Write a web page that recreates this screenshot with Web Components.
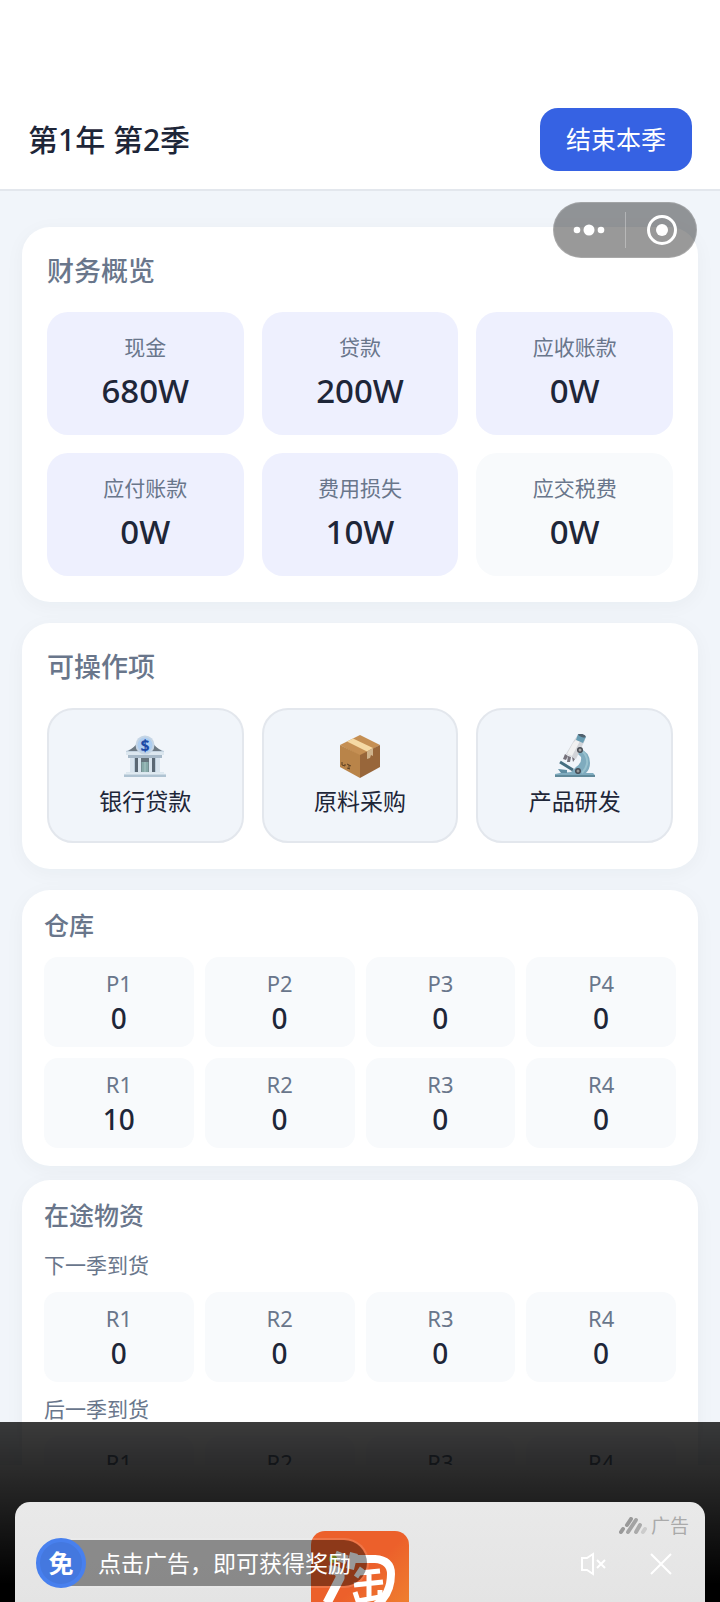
<!DOCTYPE html>
<html lang="zh-CN">
<head>
<meta charset="utf-8">
<meta name="viewport" content="width=device-width, initial-scale=1">
<title>第1年 第2季</title>
<style>
  :root {
    --ink: #1e2638;
    --muted: #69768b;
    --page: #f1f5fa;
    --line: #e3e7ed;
    --tile: #f8fafc;
    --tile-accent: #eef0fe;
    --primary: #3662e3;
  }

  body {
    margin: 0;
    background: var(--page);
    color: var(--ink);
    font-family: "Noto Sans", "Noto Sans CJK SC", sans-serif;
  }

  main {
    display: flex;
    flex-direction: column;
    padding: 36px 22px 0;
  }
</style>
</head>
<body>
  <game-header title="第1年 第2季">结束本季</game-header>

  <main>
    <info-card title="财务概览">
      <tile-grid columns="3">
        <stat-tile label="现金" accent>680W</stat-tile>
        <stat-tile label="贷款" accent>200W</stat-tile>
        <stat-tile label="应收账款" accent>0W</stat-tile>
        <stat-tile label="应付账款" accent>0W</stat-tile>
        <stat-tile label="费用损失" accent>10W</stat-tile>
        <stat-tile label="应交税费">0W</stat-tile>
      </tile-grid>
    </info-card>

    <info-card title="可操作项">
      <tile-grid columns="3">
        <action-tile icon="bank">银行贷款</action-tile>
        <action-tile icon="box">原料采购</action-tile>
        <action-tile icon="microscope">产品研发</action-tile>
      </tile-grid>
    </info-card>

    <info-card title="仓库" compact>
      <tile-grid columns="4">
        <stat-tile label="P1" compact>0</stat-tile>
        <stat-tile label="P2" compact>0</stat-tile>
        <stat-tile label="P3" compact>0</stat-tile>
        <stat-tile label="P4" compact>0</stat-tile>
        <stat-tile label="R1" compact>10</stat-tile>
        <stat-tile label="R2" compact>0</stat-tile>
        <stat-tile label="R3" compact>0</stat-tile>
        <stat-tile label="R4" compact>0</stat-tile>
      </tile-grid>
    </info-card>

    <info-card title="在途物资" compact>
      <arrival-group title="下一季到货">
        <tile-grid columns="4">
          <stat-tile label="R1" compact>0</stat-tile>
          <stat-tile label="R2" compact>0</stat-tile>
          <stat-tile label="R3" compact>0</stat-tile>
          <stat-tile label="R4" compact>0</stat-tile>
        </tile-grid>
      </arrival-group>
      <arrival-group title="后一季到货">
        <tile-grid columns="4">
          <stat-tile label="R1" compact></stat-tile>
          <stat-tile label="R2" compact></stat-tile>
          <stat-tile label="R3" compact></stat-tile>
          <stat-tile label="R4" compact></stat-tile>
        </tile-grid>
      </arrival-group>
    </info-card>
  </main>

  <app-capsule></app-capsule>
  <ad-sheet tag="广告" badge="免">点击广告，即可获得奖励</ad-sheet>

<script>
// Attach an open shadow root holding the given styles and markup.
const render = (el, css, html) => {
  const template = document.createElement('template');
  template.innerHTML = `<style>${css}</style>${html}`;
  el.attachShadow({ mode: 'open' }).appendChild(template.content.cloneNode(true));
};

const icons = {
  bank: /* html */`
    <svg viewBox="0 0 44 44" aria-hidden="true">
      <path d="M3 17 Q13 14 17 7 H27 Q31 14 41 17 V20 H3z" fill="#c3d2df"/>
      <path d="M5 17 Q12 13 15 8 V17zM39 17 Q32 13 29 8 V17z" fill="#6d7983"/>
      <path d="M3 18 H41 V21 H3z" fill="#dce7ef"/>
      <path d="M5 21 H39 V24 H5z" fill="#a8bac9"/>
      <path d="M7 24 H37 V38 H7z" fill="#b9cbd9"/>
      <path d="M12 24 H15 V38 H12zM29 24 H32 V38 H29z" fill="#596773"/>
      <path d="M17 24 H27 V38 H17z" fill="#66747d"/>
      <path d="M18.500 28 H25.500 V38 H18.500z" fill="#87aaa9"/>
      <path d="M22 28 V38" stroke="#a9c6c5"/>
      <path d="M7 24 H11 V38 H7zM15 24 H18 V38 H15zM26 24 H29 V38 H26zM33 24 H37 V38 H33z" fill="#d8e4ee"/>
      <path d="M3 38 H41 V40 H3z" fill="#dce7ef"/>
      <path d="M1 40 H43 V43 H1z" fill="#afc3d2"/>
      <path d="M1 40 H43" stroke="#e5eef4"/>
      <circle cx="22" cy="11" r="9.500" fill="#c5d5e5"/>
      <circle cx="22" cy="11" r="7.500" fill="#adcdf0"/>
      <text x="22" y="17" text-anchor="middle" font-size="16" font-weight="700" fill="#1c49a5">$</text>
    </svg>`,
  box: /* html */`
    <svg viewBox="0 0 44 44" aria-hidden="true">
      <path d="M22 1 L42 11 L22 22 L2 11z" fill="#c58f53"/>
      <path d="M2 11 L22 21 V44 L2 33z" fill="#b98449"/>
      <path d="M42 11 L22 21 V44 L42 33z" fill="#98663a"/>
      <path d="M9 7.500 L15 4.500 L35 14 L29 17.500z" fill="#f5d9a4"/>
      <path d="M29 17.500 L35 14 V22 L33 21 L32 24 L29 25z" fill="#cfb38c"/>
      <path d="M4 28 V31 L7 32 V30M9 30 L13 32M11 31 V35M9 34 L12 35" fill="none" stroke="#5c4024"/>
    </svg>`,
  microscope: /* html */`
    <svg viewBox="0 0 44 44" aria-hidden="true">
      <path d="M26 14 Q37 18 37 29 Q37 35 33 39 H40 Q42 40 42 43 H2 V40 L7 39 L18 38 L23 33 Q29 29 28 23 L24 19z" fill="#7fabbe"/>
      <path d="M29 17 Q35 22 34 30 Q33 35 29 39" fill="none" stroke="#98c1ce" stroke-width="2"/>
      <path d="M2 42 H42" stroke="#60899a" stroke-width="2"/>
      <path d="M20 8 L24 2 L32 6 L23 25 L13 20z" fill="#d2d4d8"/>
      <path d="M20 9 L24 5 L27 7 L19 22 L14 20z" fill="#f1f1f1"/>
      <path d="M25 0 L33 3 L30 9 L23 6z" fill="#699db3"/>
      <ellipse cx="29" cy="1.500" rx="4" ry="1.500" fill="#50616e" transform="rotate(20 29 1.500)"/>
      <path d="M12 20 L10 25 L13 26 L15 22zM15 22 L14 28 L17 28 L18 23zM19 23 L20 28 L22 25z" fill="#77737c"/>
      <path d="M7 28 L20 36" stroke="#466e80" stroke-width="3"/>
      <path d="M5 35 L14 36 V39 H8z" fill="#5e8ca1"/>
      <circle cx="27" cy="16" r="3" fill="#494d54"/><circle cx="27" cy="16" r="1.500" fill="#aaa"/>
      <circle cx="25" cy="37" r="3" fill="#454b54"/><circle cx="25" cy="37" r="1.500" fill="#999"/>
    </svg>`,
};

class GameHeader extends HTMLElement {
  constructor() {
    super();
    render(this, /* css */`
      :host {
        display: flex;
        align-items: center;
        justify-content: space-between;
        padding: 108px 28px 18px;
        background: #fff;
        border-bottom: 2px solid var(--line);
      }
      h1 {
        margin: 0;
        font-size: 30px;
        font-weight: 500;
        line-height: 44px;
      }
      button {
        padding: 13px 26px 14px;
        border: 0;
        border-radius: 18px;
        background: var(--primary);
        color: #fff;
        font: 400 25px/36px "Noto Sans", "Noto Sans CJK SC", sans-serif;
      }
    `, /* html */`<h1></h1><button type="button"><slot></slot></button>`);
  }

  connectedCallback() {
    this.shadowRoot.querySelector('h1').textContent = this.getAttribute('title');
  }
}

class InfoCard extends HTMLElement {
  constructor() {
    super();
    render(this, /* css */`
      :host {
        display: block;
        margin-bottom: 21px;
        padding: 25px 25px 26px;
        border-radius: 28px;
        background: #fff;
        box-shadow: 0 4px 20px rgba(30, 41, 59, .04);
      }
      h2 {
        margin: 0 0 22px;
        color: var(--muted);
        font-size: 27px;
        font-weight: 500;
        line-height: 38px;
      }
      :host([compact]) {
        margin-bottom: 14px;
        padding: 18px 22px;
      }
      :host([compact]) h2 {
        margin-bottom: 15px;
        font-size: 25px;
        line-height: 34px;
      }
    `, /* html */`<h2></h2><slot></slot>`);
  }

  connectedCallback() {
    this.shadowRoot.querySelector('h2').textContent = this.getAttribute('title');
  }
}

class TileGrid extends HTMLElement {
  constructor() {
    super();
    render(this, /* css */`
      :host {
        display: grid;
        grid-template-columns: repeat(3, 1fr);
        gap: 18px;
      }
      :host([columns="4"]) {
        grid-template-columns: repeat(4, 1fr);
        gap: 11px;
      }
    `, /* html */`<slot></slot>`);
  }
}

class StatTile extends HTMLElement {
  constructor() {
    super();
    render(this, /* css */`
      :host {
        display: block;
        padding: 20px 0 22px;
        border-radius: 21px;
        background: var(--tile);
        text-align: center;
      }
      :host([accent]) {
        background: var(--tile-accent);
      }
      .label {
        margin-bottom: 6px;
        color: var(--muted);
        font-size: 21px;
        line-height: 30px;
      }
      .value {
        height: 45px;
        font-size: 33px;
        font-weight: 500;
        line-height: 45px;
      }
      :host([compact]) {
        padding: 10px 0;
        border-radius: 14px;
      }
      :host([compact]) .label {
        margin: 0;
        font-size: 22px;
        line-height: 32px;
      }
      :host([compact]) .value {
        height: 38px;
        font-size: 28px;
        line-height: 38px;
      }
    `, /* html */`<div class="label"></div><div class="value"><slot></slot></div>`);
  }

  connectedCallback() {
    this.shadowRoot.querySelector('.label').textContent = this.getAttribute('label');
  }
}

class ActionTile extends HTMLElement {
  constructor() {
    super();
    render(this, /* css */`
      :host {
        display: block;
      }
      button {
        display: flex;
        flex-direction: column;
        align-items: center;
        gap: 6px;
        width: 100%;
        padding: 24px 0 23px;
        border: 2px solid var(--line);
        border-radius: 26px;
        background: var(--page);
        color: var(--ink);
        font: 400 23px/34px "Noto Sans", "Noto Sans CJK SC", sans-serif;
      }
      svg {
        display: block;
        width: 44px;
        height: 44px;
      }
    `, /* html */`<button type="button">${icons[this.getAttribute('icon')]}<span><slot></slot></span></button>`);
  }
}

class ArrivalGroup extends HTMLElement {
  constructor() {
    super();
    render(this, /* css */`
      :host {
        display: block;
        margin-bottom: 9px;
      }
      h3 {
        margin: 0 0 8px;
        color: var(--muted);
        font-size: 21px;
        font-weight: 400;
        line-height: 37px;
      }
    `, /* html */`<h3></h3><slot></slot>`);
  }

  connectedCallback() {
    this.shadowRoot.querySelector('h3').textContent = this.getAttribute('title');
  }
}

// Floating menu / close pill
class AppCapsule extends HTMLElement {
  constructor() {
    super();
    render(this, /* css */`
      :host {
        position: fixed;
        top: 202px;
        right: 23px;
        display: flex;
        align-items: center;
        box-sizing: border-box;
        width: 144px;
        height: 56px;
        border: 1px solid rgba(255, 255, 255, .15);
        border-radius: 28px;
        background: rgba(0, 0, 0, .4);
      }
      button {
        flex: 1;
        display: flex;
        justify-content: center;
        padding: 0;
        border: 0;
        background: none;
      }
      i {
        width: 1px;
        height: 36px;
        background: rgba(255, 255, 255, .3);
      }
      svg {
        width: 32px;
        height: 32px;
        fill: #fff;
      }
    `, /* html */`
      <button type="button" aria-label="更多">
        <svg viewBox="0 0 32 32"><circle cx="4" cy="16" r="3.300"/><circle cx="16" cy="16" r="5.500"/><circle cx="28" cy="16" r="3.300"/></svg>
      </button>
      <i></i>
      <button type="button" aria-label="关闭">
        <svg viewBox="0 0 32 32"><circle cx="17" cy="16" r="13.500" fill="none" stroke="#fff" stroke-width="3"/><circle cx="17" cy="16" r="6"/></svg>
      </button>
    `);
  }
}

class AdSheet extends HTMLElement {
  constructor() {
    super();
    render(this, /* css */`
      :host {
        position: fixed;
        inset: auto 0 0;
        display: block;
        height: 180px;
      }
      /* the tab bar strip under the shade */
      .bar {
        position: absolute;
        inset: 43px 0 0;
        background: #fff;
      }
      .shade {
        position: relative;
        box-sizing: border-box;
        height: 100%;
        padding: 80px 15px 0;
        overflow: hidden;
        background: linear-gradient(rgba(0, 0, 0, .77), rgba(0, 0, 0, .88) 45%, #000 90%);
      }
      .sheet {
        position: relative;
        box-sizing: border-box;
        height: 100px;
        border-radius: 15px 15px 0 0;
        background: linear-gradient(#e9e9e9, #e4e4e4);
      }
      .logo {
        position: absolute;
        top: 29px;
        left: calc(50% - 49px);
        width: 98px;
        height: 98px;
        clip-path: inset(0 0 27px 0);
      }
      .tag {
        position: absolute;
        top: 10px;
        right: 16px;
        display: flex;
        align-items: center;
        gap: 4px;
        color: #aaa;
        font-size: 19px;
        line-height: 28px;
      }
      .tag svg {
        width: 28px;
        height: 18px;
      }
      .offer {
        position: absolute;
        top: 36px;
        left: 21px;
        display: flex;
        align-items: center;
        color: #fff;
        font-size: 23px;
        line-height: 46px;
        text-decoration: none;
      }
      .offer .text {
        margin-left: -26px;
        padding: 0 16px 0 38px;
        border: 2px solid rgba(255, 255, 255, .14);
        border-left: 0;
        border-radius: 0 25px 25px 0;
        background: rgba(0, 0, 0, .4);
        background-clip: padding-box;
        white-space: nowrap;
      }
      .badge {
        position: relative;
        z-index: 1;
        box-sizing: border-box;
        width: 50px;
        height: 50px;
        border: 4px solid #4880ee;
        border-radius: 50%;
        background: #4478df;
        font-size: 25px;
        font-weight: 700;
        line-height: 42px;
        text-align: center;
      }
      .tools {
        position: absolute;
        top: 48px;
        right: 32px;
        display: flex;
        gap: 42px;
      }
      .tools button {
        padding: 0;
        border: 0;
        background: none;
      }
      .tools svg {
        display: block;
        height: 28px;
        fill: none;
        stroke: #fff;
        stroke-width: 2;
      }
    `, /* html */`
      <div class="bar"></div>
      <div class="shade">
        <div class="sheet">
          <svg class="logo" viewBox="0 0 98 98" aria-hidden="true">
            <defs>
              <linearGradient id="orange" x2="1" y2="1">
                <stop offset=".5" stop-color="#ec602b"/><stop offset="1" stop-color="#f08a30"/>
              </linearGradient>
            </defs>
            <rect width="98" height="98" rx="14" fill="url(#orange)"/>
            <g fill="none" stroke="#fff" stroke-width="7" stroke-linejoin="round">
              <path d="M24 24 L36 29M18 39 Q30 38 29 47 L16 72" stroke-width="9"/>
              <path d="M43 22 L39 38M42 28 H64 Q80 29 80 43 Q80 64 64 75" stroke-width="8"/>
              <path d="M51 37 L45 46M48 42 L69 40M43 54 L72 51M58 42 V68M44 61 L47 70 L69 66M69 59 V70" stroke-width="5"/>
            </g>
            <circle cx="22" cy="28" r="4" fill="#b5d332"/>
          </svg>
          <div class="tag">
            <svg viewBox="0 0 28 18" fill="none" stroke-width="4" stroke-linecap="round" aria-hidden="true">
              <path d="M8 8 L12 2M2 15 L4 12" stroke="#999"/>
              <path d="M9 15 L17 3" stroke="#a3a3a3"/>
              <path d="M17 15 L21 8" stroke="#aaa"/>
              <path d="M24 15 L26 12" stroke="#ccc"/>
            </svg>
            <span></span>
          </div>
          <a class="offer" href="#"><span class="badge"></span><span class="text"><slot></slot></span></a>
          <div class="tools">
            <button type="button" aria-label="静音">
              <svg viewBox="0 0 28 28" width="28"><path d="M3 8 H8 L14 4 V24 L8 20 H3zM18 10 L26 18M26 10 L18 18"/></svg>
            </button>
            <button type="button" aria-label="关闭广告">
              <svg viewBox="0 0 24 28" width="24"><path d="M2 4 L22 24M22 4 L2 24"/></svg>
            </button>
          </div>
        </div>
      </div>
    `);
  }

  connectedCallback() {
    this.shadowRoot.querySelector('.tag span').textContent = this.getAttribute('tag');
    this.shadowRoot.querySelector('.badge').textContent = this.getAttribute('badge');
  }
}

customElements.define('game-header', GameHeader);
customElements.define('info-card', InfoCard);
customElements.define('tile-grid', TileGrid);
customElements.define('stat-tile', StatTile);
customElements.define('action-tile', ActionTile);
customElements.define('arrival-group', ArrivalGroup);
customElements.define('app-capsule', AppCapsule);
customElements.define('ad-sheet', AdSheet);
</script>
</body>
</html>
